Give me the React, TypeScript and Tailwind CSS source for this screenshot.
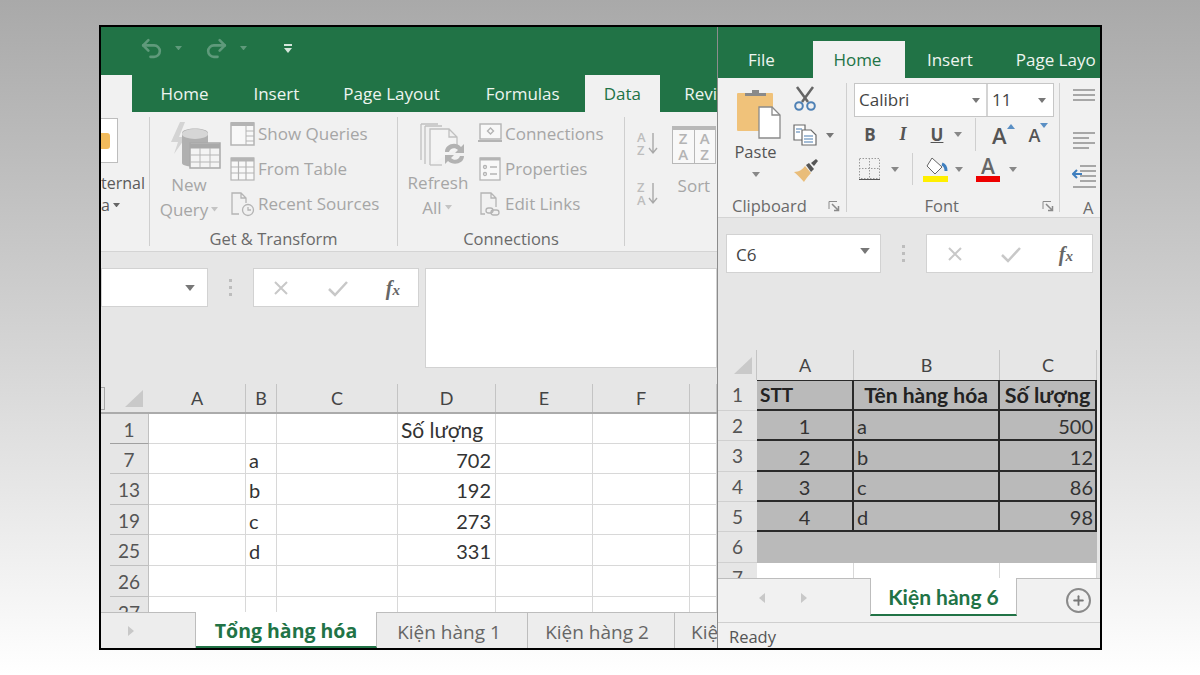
import { Undo2, Redo2, Plus } from "lucide-react"

// small dropdown triangle used all over the ribbon
function Caret({ className = "text-[#8a8a8a]", w = 8 }: { className?: string; w?: number }) {
  return (
    <svg width={w} height={w / 2 + 1} viewBox="0 0 8 5" className={`inline-block shrink-0 ${className}`}>
      <path d="M0 0h8L4 5z" fill="currentColor" />
    </svg>
  )
}

function ShowQueriesIcon() {
  return (
    <svg width="26" height="26" viewBox="0 0 26 26" fill="none" stroke="#b4b4b4" strokeWidth="1.5">
      <rect x="1" y="2" width="23" height="22" fill="#f8f8f8" />
      <path d="M1 3h23" strokeWidth="4" />
      <path d="M16 5v19M16 10h8M16 15h8M16 20h8" strokeWidth="1" />
    </svg>
  )
}

function FromTableIcon() {
  return (
    <svg width="26" height="26" viewBox="0 0 26 26" fill="none" stroke="#b4b4b4" strokeWidth="1.2">
      <rect x="1" y="2" width="23" height="22" fill="#f8f8f8" />
      <path d="M1 3.5h23" strokeWidth="4" />
      <path d="M1 11h23M1 17h23M8.5 5v19M16 5v19" />
    </svg>
  )
}

function RecentIcon() {
  return (
    <svg width="26" height="26" viewBox="0 0 26 26" fill="none" stroke="#b4b4b4" strokeWidth="1.3">
      <path d="M9 23H2V2h9l5 5v5M11 2v5h5" />
      <circle cx="18" cy="19" r="5.5" fill="#f1f1f1" />
      <path d="M18 16v3h3" />
    </svg>
  )
}

function NewQueryIcon() {
  return (
    <svg width="52" height="50" viewBox="0 0 52 50" fill="none">
      <path d="M10 1 1 21h7l-4 12 12-17h-7l6-15z" fill="#d4d4d4" />
      <path d="M12 12c0-6 26-6 26 0v30c0 5-26 5-26 0z" fill="#b0b0b0" />
      <ellipse cx="25" cy="13" rx="13" ry="5" fill="#d6d6d6" />
      <rect x="20" y="22" width="30" height="25" fill="#f4f4f4" stroke="#a9a9a9" strokeWidth="1.5" />
      <path d="M20 25h30" stroke="#a9a9a9" strokeWidth="5" />
      <path d="M20 34h30M20 41h30M30 27v20M40 27v20" stroke="#b6b6b6" />
    </svg>
  )
}

function ConnectionsIcon() {
  return (
    <svg width="24" height="22" viewBox="0 0 24 22" fill="none" stroke="#b4b4b4" strokeWidth="1.4">
      <rect x="2" y="1" width="21" height="15" fill="#f8f8f8" />
      <path d="M0 18h24" strokeWidth="2" />
      <path d="M12.5 5l3 3-3 3-3-3z" />
    </svg>
  )
}

function PropertiesIcon() {
  return (
    <svg width="22" height="25" viewBox="0 0 22 25" fill="none" stroke="#b4b4b4" strokeWidth="1.3">
      <rect x="1" y="2" width="20" height="22" fill="#f8f8f8" />
      <path d="M1 3h20" strokeWidth="3" />
      <circle cx="6" cy="11" r="1.5" />
      <circle cx="6" cy="18" r="1.5" />
      <path d="M11 11h7M11 18h7" />
    </svg>
  )
}

function EditLinksIcon() {
  return (
    <svg width="22" height="25" viewBox="0 0 22 25" fill="none" stroke="#b4b4b4" strokeWidth="1.3">
      <path d="M6 23H2V2h10l5 5v9M12 2v5h5" />
      <rect x="7" y="17" width="7" height="5" rx="2.5" />
      <rect x="12" y="19" width="8" height="5" rx="2.5" />
    </svg>
  )
}

function RefreshIcon() {
  return (
    <svg width="48" height="46" viewBox="0 0 48 46" fill="none" stroke="#c0c0c0" strokeWidth="1.3">
      <path d="M2 1h17M2 1v36M6 3h17M6 3v38" />
      <path d="M11 42V6h19l8 8v12M30 6v8h8" fill="#f4f4f4" />
      <path d="M11 42h12" />
      <path d="M27 33c0-8 11-11 16-5l3-3v9h-9l3-3c-3-3-8-2-9 2zM46 37c0 8-11 10-16 5l-3 3v-9h9l-3 3c3 3 8 2 9-2z" fill="#b2b2b2" stroke="none" transform="translate(-1 -4)" />
    </svg>
  )
}

function ScissorsIcon() {
  return (
    <svg width="24" height="25" viewBox="0 0 24 25" fill="none">
      <path d="M4 1l11 15M20 1 9 16" stroke="#666" strokeWidth="2.500" />
      <circle cx="6" cy="20" r="3.800" stroke="#4f81b5" strokeWidth="2" />
      <circle cx="18" cy="20" r="3.800" stroke="#4f81b5" strokeWidth="2" />
    </svg>
  )
}

function SortAZ({ top, bottom }: { top: string; bottom: string }) {
  return (
    <div className="flex items-center gap-[2px] text-[#bdbdbd]">
      <div className="flex flex-col text-[13px] leading-[13px] font-semibold">
        <span>{top}</span>
        <span>{bottom}</span>
      </div>
      <svg width="10" height="22" viewBox="0 0 10 22" fill="none" stroke="#a9a9a9" strokeWidth="1.4">
        <path d="M5 0v20M1 15l4 5 4-5" />
      </svg>
    </div>
  )
}

function ListRow({ icon, label }: { icon: React.ReactNode; label: string }) {
  return (
    <div className="flex h-[35px] items-center">
      <div className="flex w-[30px] shrink-0 justify-center">{icon}</div>
      <span className="text-[17px] whitespace-nowrap text-[#a6a6a6]">{label}</span>
    </div>
  )
}

function GroupLabel({ children }: { children: React.ReactNode }) {
  return <div className="text-center text-[16.500px] leading-[24px] text-[#6a6a6a]">{children}</div>
}

function Launcher() {
  return (
    <svg width="12" height="12" viewBox="0 0 12 12" fill="none" stroke="#8a8a8a">
      <path d="M1 9V1.500h8" />
      <path d="M4 4l6 6M6 10.500h4.500V6" strokeWidth="1.500" />
    </svg>
  )
}

function FormulaButtons() {
  return (
    <>
      <svg width="18" height="18" viewBox="0 0 18 18" fill="none" stroke="#c8c8c8" strokeWidth="2">
        <path d="M3 3l12 12M15 3 3 15" />
      </svg>
      <svg width="22" height="18" viewBox="0 0 22 18" fill="none" stroke="#c8c8c8" strokeWidth="2.500">
        <path d="M2 10l6 6L20 3" />
      </svg>
      <span className="font-['Liberation_Serif',serif] text-[20px] font-bold text-[#666] italic">
        f<span className="text-[15px]">x</span>
      </span>
    </>
  )
}

function SelectAll() {
  return (
    <svg width="18" height="17" viewBox="0 0 18 17">
      <path d="M18 0v17H0z" fill="#c9c9c9" />
    </svg>
  )
}

const Dots = () => (
  <div className="flex w-[3px] flex-col gap-[4px]">
    <div className="h-[3px] bg-[#bdbdbd]" />
    <div className="h-[3px] bg-[#bdbdbd]" />
    <div className="h-[3px] bg-[#bdbdbd]" />
  </div>
)

const leftRows = [
  { n: "1", h: "h-[30px]", b: "", d: "Số lượng", right: false },
  { n: "7", h: "h-[30px]", b: "a", d: "702", right: true },
  { n: "13", h: "h-[31px]", b: "b", d: "192", right: true },
  { n: "19", h: "h-[30px]", b: "c", d: "273", right: true },
  { n: "25", h: "h-[31px]", b: "d", d: "331", right: true },
  { n: "26", h: "h-[31px]", b: "", d: "", right: true },
  { n: "27", h: "h-[31px]", b: "", d: "", right: true },
]

const leftCols = "grid grid-cols-[97px_31px_121px_98px_97px_97px_27px]"

const rightRows = [
  { n: "2", h: "h-[30px]", a: "1", b: "a", c: "500" },
  { n: "3", h: "h-[31px]", a: "2", b: "b", c: "12" },
  { n: "4", h: "h-[30px]", a: "3", b: "c", c: "86" },
  { n: "5", h: "h-[30px]", a: "4", b: "d", c: "98" },
]

function LeftPane() {
  const cell = "border-r border-b border-[#d8d8d8] overflow-hidden"
  return (
    <div className="flex w-[616px] shrink-0 flex-col overflow-hidden font-['Open_Sans',sans-serif]">
      {/* title bar with quick access icons */}
      <div className="flex h-[48px] shrink-0 items-center bg-[#217346] pb-[6px] pl-[38px]">
        <Undo2 size={25} strokeWidth={2.500} className="text-[#5f9a7b]" />
        <Caret className="ml-[11px] text-[#5f9a7b]" w={7} />
        <Redo2 size={25} strokeWidth={2.500} className="ml-[22px] text-[#5f9a7b]" />
        <Caret className="ml-[11px] text-[#5f9a7b]" w={7} />
        <div className="ml-[37px] flex flex-col items-center gap-[2px]">
          <div className="h-[2px] w-[8px] bg-[#d5e5db]" />
          <Caret className="text-[#d5e5db]" w={8} />
        </div>
      </div>
      {/* tabs */}
      <div className="flex h-[37px] shrink-0 items-center bg-[#217346] text-[17px] whitespace-nowrap text-[#eef5f0]">
        <div className="h-full w-[32px] bg-[#f1f1f1]" />
        <span className="ml-[28px]">Home</span>
        <span className="ml-[45px]">Insert</span>
        <span className="ml-[44px]">Page Layout</span>
        <span className="ml-[46px]">Formulas</span>
        <div className="ml-[25px] flex h-full w-[77px] items-center justify-center bg-[#f1f1f1] text-[#217346]">Data</div>
        <span className="ml-[24px]">Revi</span>
      </div>
      {/* ribbon */}
      <div className="flex h-[140px] shrink-0 overflow-hidden border-b border-[#d4d4d4] bg-[#f1f1f1]">
        <div className="my-[5px] flex w-[49px] shrink-0 flex-col border-r border-[#cfcfcf]">
          <div className="mt-[1px] flex h-[45px] w-[17px] shrink-0 items-center overflow-hidden border-y border-r border-[#bdbdbd] bg-white">
            <div className="h-[16px] w-[9px] rounded-r-[3px] bg-[#f2bb5c]" />
          </div>
          <div className="mt-[9px] pr-[4px] text-right text-[16px] leading-[22px] text-[#5a5a5a]">ternal</div>
          <div className="flex items-center text-[16px] leading-[22px] text-[#5a5a5a]">
            a<Caret className="ml-[3px] text-[#666]" w={7} />
          </div>
        </div>
        <div className="my-[5px] flex w-[248px] shrink-0 flex-col border-r border-[#cfcfcf]">
          <div className="flex h-[110px] shrink-0">
            <div className="flex w-[78px] flex-col items-center pt-[4px] text-[17px] leading-[25px] text-[#a6a6a6]">
              <div className="ml-[14px]">
                <NewQueryIcon />
              </div>
              <span className="mt-[1px]">New</span>
              <span className="flex items-center gap-[3px]">
                Query
                <Caret className="text-[#c4c4c4]" w={7} />
              </span>
            </div>
            <div className="-mt-px flex flex-col">
              <ListRow icon={<ShowQueriesIcon />} label="Show Queries" />
              <ListRow icon={<FromTableIcon />} label="From Table" />
              <ListRow icon={<RecentIcon />} label="Recent Sources" />
            </div>
          </div>
          <GroupLabel>Get &amp; Transform</GroupLabel>
        </div>
        <div className="my-[5px] flex w-[227px] shrink-0 flex-col border-r border-[#cfcfcf]">
          <div className="flex h-[110px] shrink-0">
            <div className="flex w-[78px] flex-col items-center pt-[6px] text-[17px] leading-[25px] text-[#a6a6a6]">
              <div className="ml-[12px]">
                <RefreshIcon />
              </div>
              <span className="mt-[1px] pl-[2px]">Refresh</span>
              <span className="flex items-center gap-[3px]">
                All
                <Caret className="text-[#c4c4c4]" w={7} />
              </span>
            </div>
            <div className="-mt-px -ml-px flex flex-col">
              <ListRow icon={<ConnectionsIcon />} label="Connections" />
              <ListRow icon={<PropertiesIcon />} label="Properties" />
              <ListRow icon={<EditLinksIcon />} label="Edit Links" />
            </div>
          </div>
          <GroupLabel>Connections</GroupLabel>
        </div>
        <div className="flex">
          <div className="ml-[12px] flex flex-col gap-[24px] pt-[19px]">
            <SortAZ top="A" bottom="Z" />
            <SortAZ top="Z" bottom="A" />
          </div>
          <div className="ml-[14px] flex flex-col pt-[14px]">
            <div className="grid h-[38px] w-[44px] shrink-0 grid-cols-2 overflow-hidden border-x border-b border-t-[4px] border-[#b8b8b8] bg-[#f8f8f8] text-center text-[15px] leading-[16px] font-semibold text-[#b4b4b4]">
              <div className="flex flex-col">
                <span>Z</span>
                <span>A</span>
              </div>
              <div className="flex flex-col border-l border-[#b8b8b8]">
                <span>A</span>
                <span>Z</span>
              </div>
            </div>
            <span className="mt-[9px] ml-[6px] text-[17px] leading-[25px] text-[#a6a6a6]">Sort</span>
          </div>
        </div>
      </div>
      {/* formula bar */}
      <div className="flex h-[132px] shrink-0 items-start bg-[#e6e6e6] pt-[16px]">
        <div className="flex h-[39px] w-[107px] items-center justify-end border border-[#d2d2d2] bg-white pr-[12px]">
          <Caret className="text-[#777]" w={10} />
        </div>
        <div className="flex h-[39px] w-[45px] items-center justify-center">
          <Dots />
        </div>
        <div className="flex h-[39px] w-[166px] items-center justify-between border border-[#d2d2d2] bg-white px-[18px]">
          <FormulaButtons />
        </div>
        <div className="ml-[6px] h-[100px] flex-1 border border-[#d2d2d2] bg-white" />
      </div>
      {/* column headers */}
      <div className="flex h-[30px] shrink-0 border-b-2 border-[#ababab] bg-[#e6e6e6] text-[18px] text-[#444]">
        <div className="flex w-[48px] shrink-0 items-center">
          <div className="h-[23px] w-[4px] border-y border-r border-[#a8a8a8]" />
          <div className="ml-[20px]">
            <SelectAll />
          </div>
        </div>
        <div className={`${leftCols} flex-1`}>
          {["A", "B", "C", "D", "E", "F", ""].map((c, i) => (
            <div key={i} className="flex items-center justify-center border-r border-[#c4c4c4] font-['Lato',sans-serif]">
              {c}
            </div>
          ))}
        </div>
      </div>
      {/* sheet rows */}
      <div className="min-h-0 flex-1 overflow-hidden bg-white font-['Lato',sans-serif] text-[20px] leading-[24px] text-[#333]">
        {leftRows.map((r) => (
          <div key={r.n} className={`flex ${r.h}`}>
            <div className="w-[48px] shrink-0 bg-[#e6e6e6] pl-[9px]">
              <div className={`flex h-full items-center justify-center border-r border-b border-[#c0c0c0] pt-[2px] text-[19px] text-[#555] ${r.n === "1" ? "border-b-[#a0a0a0]" : ""}`}>
                {r.n}
              </div>
            </div>
            <div className={`${leftCols} flex-1`}>
              <div className={cell} />
              <div className={`${cell} flex items-center pt-[2px] pl-[3px]`}>{r.b}</div>
              <div className={cell} />
              <div className={`${cell} flex items-center pt-[2px] pr-[4px] pl-[3px] ${r.right ? "justify-end" : "text-[21px] whitespace-nowrap"}`}>{r.d}</div>
              <div className={cell} />
              <div className={cell} />
              <div className={cell} />
            </div>
          </div>
        ))}
      </div>
      {/* sheet tabs */}
      <div className="flex h-[36px] shrink-0 border-t border-[#bdbdbd] bg-[#ededed] text-[19px] text-[#666]">
        <div className="flex w-[95px] shrink-0 items-center border-r border-[#bdbdbd] pl-[27px]">
          <svg width="6" height="10" viewBox="0 0 6 10">
            <path d="M0 0l6 5-6 5z" fill="#c8c8c8" />
          </svg>
        </div>
        <div className="-mt-px flex w-[181px] shrink-0 items-center justify-center border-r border-b-2 border-r-[#bdbdbd] border-b-[#217346] bg-white pt-[3px] text-[19.500px] font-bold text-[#217346]">
          Tổng hàng hóa
        </div>
        <div className="flex w-[151px] shrink-0 items-center justify-center border-r border-[#bdbdbd] pt-[3px] pr-[6px]">Kiện hàng 1</div>
        <div className="flex w-[147px] shrink-0 items-center justify-center border-r border-[#bdbdbd] pt-[3px] pr-[8px]">Kiện hàng 2</div>
        <span className="ml-[16px] self-center pt-[3px]">Kiệ</span>
      </div>
    </div>
  )
}

function RightPane() {
  const dark = "border-r-2 border-b-2 border-[#2a2a2a]"
  const num = "flex w-[39px] shrink-0 items-center justify-center border-b border-[#d0d0d0] text-[19px] text-[#555]"
  return (
    <div className="flex min-w-0 flex-1 flex-col overflow-hidden border-l border-[#8c8c8c] font-['Open_Sans',sans-serif]">
      {/* tabs on top of the green bar */}
      <div className="flex h-[51px] shrink-0 items-end bg-[#217346] text-[17px] whitespace-nowrap text-[#eef5f0]">
        <span className="ml-[30px] h-[37px] leading-[37px]">File</span>
        <div className="ml-[38px] flex h-[37px] w-[92px] items-center justify-center bg-[#f1f1f1] pr-[3px] text-[#217346]">Home</div>
        <span className="ml-[22px] h-[37px] leading-[37px]">Insert</span>
        <span className="ml-[43px] h-[37px] leading-[37px]">Page Layo</span>
      </div>
      {/* ribbon */}
      <div className="flex h-[140px] shrink-0 overflow-hidden border-b border-[#d4d4d4] bg-[#f1f1f1]">
        <div className="my-[5px] flex w-[129px] shrink-0 flex-col border-r border-[#cfcfcf]">
          <div className="flex h-[110px] shrink-0">
            <div className="flex w-[75px] flex-col items-center pt-[6px]">
              <svg width="44" height="50" viewBox="0 0 44 50" className="ml-[6px]">
                <rect x="0" y="4" width="36" height="38" rx="1" fill="#f0c27a" />
                <path d="M8 7V4h7V1h7v3h7v3z" fill="#8a8a8a" />
                <path d="M22 18h13l8 8v23H22z" fill="#fff" stroke="#8a8a8a" strokeWidth="1.300" />
                <path d="M35 18v8h8" fill="none" stroke="#8a8a8a" strokeWidth="1.300" />
              </svg>
              <span className="mt-[1px] text-[16.500px] leading-[24px] text-[#555]">Paste</span>
              <Caret className="mt-[8px] text-[#888]" w={8} />
            </div>
            <div className="flex flex-col pt-[3px]">
              <ScissorsIcon />
              <div className="mt-[13px] flex items-center">
                <svg width="24" height="22" viewBox="0 0 24 22" fill="#fff" stroke="#6a6a6a" strokeWidth="1.200">
                  <path d="M1 1h11v15H1z" />
                  <path d="M9 6h9l5 5v10H9z" />
                  <path d="M11 12h9M11 15h9M11 18h9M3 5h6M3 8h4" stroke="#4a7cb0" />
                </svg>
                <Caret className="ml-[9px] text-[#777]" w={8} />
              </div>
              <svg width="26" height="24" viewBox="0 0 26 24" className="mt-[13px]">
                <path d="M1 13c5 0 9-3 11-6l6 7c-3 3-6 7-7 9-3-3-6-7-10-10z" fill="#e9bd7a" />
                <path d="M13 6l3-2 5 6-3 3z" fill="#555" />
                <path d="M18 4l5-4 2 2-4 5z" fill="#555" />
              </svg>
            </div>
          </div>
          <div className="flex items-center justify-between pt-[1px] pr-[6px] pl-[14px]">
            <span className="text-[16.500px] leading-[24px] text-[#6a6a6a]">Clipboard</span>
            <Launcher />
          </div>
        </div>
        <div className="my-[5px] flex w-[213px] shrink-0 flex-col border-r border-[#cfcfcf]">
          <div className="flex h-[110px] shrink-0 flex-col pl-[7px]">
            <div className="flex h-[34px] w-[200px] shrink-0 border border-[#c6c6c6] bg-white text-[17px] leading-[24px] text-[#444]">
              <div className="flex w-[133px] items-center justify-between border-r-2 border-[#d4d4d4] pr-[6px] pl-[4px]">
                Calibri
                <Caret className="text-[#777]" w={8} />
              </div>
              <div className="flex flex-1 items-center justify-between pr-[7px] pl-[4px]">
                11
                <Caret className="text-[#777]" w={8} />
              </div>
            </div>
            <div className="flex h-[35px] shrink-0 items-center text-[#555]">
              <span className="ml-[8px] w-[16px] text-center text-[17px] font-bold">B</span>
              <span className="ml-[17px] w-[16px] text-center font-['Liberation_Serif',serif] text-[18px] font-bold italic">I</span>
              <span className="ml-[18px] w-[16px] text-center text-[17px] font-bold underline">U</span>
              <Caret className="ml-[9px] text-[#888]" w={8} />
              <div className="ml-[13px] h-[33px] w-px bg-[#cfcfcf]" />
              <div className="ml-[16px] flex items-start text-[22px] leading-[26px] font-semibold">
                A
                <svg width="8" height="5" viewBox="0 0 8 5" className="mt-[2px]">
                  <path d="M0 5 4 0l4 5z" fill="#5a8fc4" />
                </svg>
              </div>
              <div className="ml-[14px] flex items-start text-[18px] leading-[26px] font-semibold">
                A
                <svg width="8" height="5" viewBox="0 0 8 5" className="mt-[1px]">
                  <path d="M0 0h8L4 5z" fill="#5a8fc4" />
                </svg>
              </div>
            </div>
            <div className="flex h-[34px] shrink-0 items-center">
              <svg width="22" height="22" viewBox="0 0 22 22" fill="none" stroke="#9a9a9a" strokeDasharray="1.500 1.500" className="ml-[5px]">
                <rect x="0.500" y="0.500" width="20" height="20" />
                <path d="M0 10.500h21M10.500 0v21" />
                <path d="M0 21.500h21" stroke="#555" strokeDasharray="none" />
              </svg>
              <Caret className="ml-[10px] text-[#888]" w={8} />
              <div className="ml-[13px] h-[32px] w-px bg-[#cfcfcf]" />
              <svg width="26" height="26" viewBox="0 0 26 26" className="ml-[10px]">
                <path d="M9 2l10 9-7 7-8-8z" fill="#fff" stroke="#666" />
                <path d="M19 8c3 1 4 4 4 7" stroke="#3f7fbf" strokeWidth="3" fill="none" />
                <rect x="0" y="20" width="25" height="6" fill="#ffef00" />
              </svg>
              <Caret className="ml-[6px] text-[#888]" w={8} />
              <div className="ml-[13px] flex w-[24px] flex-col items-center">
                <span className="text-[21px] leading-[19px] font-semibold text-[#666]">A</span>
                <div className="h-[6px] w-[24px] bg-[#ee0000]" />
              </div>
              <Caret className="ml-[9px] text-[#888]" w={8} />
            </div>
          </div>
          <div className="flex items-center justify-end pt-[1px] pr-[5px]">
            <span className="mr-[83px] text-[16.500px] leading-[24px] text-[#6a6a6a]">Font</span>
            <Launcher />
          </div>
        </div>
        <div className="flex flex-col pl-[12px]">
          <svg width="24" height="112" viewBox="0 0 24 112" fill="none" stroke="#8f8f8f" strokeWidth="1.500" className="mt-[6px] shrink-0">
            <path d="M1 6h22M1 11h22M1 16h22" />
            <path d="M1 49h22M1 54h16M1 59h22M1 64h16" />
            <path d="M8 82h16M8 87h16M8 92h16M8 97h16M1 103h23" />
            <path d="M10 90H2m3-4-4 4 4 4" stroke="#3f7fbf" strokeWidth="2" />
          </svg>
          <span className="ml-[11px] text-[16.500px] leading-[24px] text-[#6a6a6a]">A</span>
        </div>
      </div>
      {/* formula bar */}
      <div className="flex h-[132px] shrink-0 items-start bg-[#e6e6e6] pt-[16px]">
        <div className="ml-[8px] flex h-[39px] w-[155px] items-center justify-between border border-[#d2d2d2] bg-white pt-[2px] pr-[10px] pl-[9px] text-[17px] text-[#444]">
          C6
          <Caret className="-mt-[8px] text-[#777]" w={10} />
        </div>
        <div className="flex h-[39px] w-[45px] items-center justify-center">
          <Dots />
        </div>
        <div className="flex h-[39px] w-[167px] items-center justify-between border border-[#d2d2d2] bg-white px-[19px]">
          <FormulaButtons />
        </div>
      </div>
      {/* column headers */}
      <div className="flex h-[30px] shrink-0 bg-[#e6e6e6] text-[18px] text-[#444]">
        <div className="flex w-[39px] shrink-0 items-center justify-end border-r border-[#c4c4c4] pr-[4px]">
          <SelectAll />
        </div>
        <div className="grid flex-1 grid-cols-[97px_146px_97px_4px] font-['Lato',sans-serif]">
          <div className="flex items-center justify-center border-r border-[#c4c4c4]">A</div>
          <div className="flex items-center justify-center border-r border-[#c4c4c4]">B</div>
          <div className="flex items-center justify-center border-r border-[#c4c4c4]">C</div>
          <div />
        </div>
      </div>
      {/* sheet rows */}
      <div className="min-h-0 flex-1 overflow-hidden bg-[#e6e6e6] font-['Lato',sans-serif] text-[20px] leading-[24px] text-[#333]">
        <div className="flex h-[31px]">
          <div className={num}>1</div>
          <div className="grid w-[340px] grid-cols-[97px_146px_97px] border-t border-[#2a2a2a] bg-[#bababa] font-bold text-[#222]">
            <div className={`${dark} flex items-center pl-[3px] text-[19px]`}>STT</div>
            <div className={`${dark} flex items-center justify-center text-[21px] whitespace-nowrap`}>Tên hàng hóa</div>
            <div className={`${dark} flex items-center justify-center text-[21.500px] whitespace-nowrap`}>Số lượng</div>
          </div>
        </div>
        {rightRows.map((r) => (
          <div key={r.n} className={`flex ${r.h}`}>
            <div className={num}>{r.n}</div>
            <div className="grid w-[340px] grid-cols-[97px_146px_97px] bg-[#bababa]">
              <div className={`${dark} flex items-center justify-center pt-[2px]`}>{r.a}</div>
              <div className={`${dark} flex items-center pt-[2px] pl-[3px]`}>{r.b}</div>
              <div className={`${dark} flex items-center justify-end pt-[2px] pr-[2px]`}>{r.c}</div>
            </div>
          </div>
        ))}
        <div className="flex h-[31px]">
          <div className={num}>6</div>
          <div className="w-[340px] bg-[#bababa]" />
        </div>
        <div className="flex h-[31px]">
          <div className={num}>7</div>
          <div className="grid w-[340px] grid-cols-[97px_146px_97px] bg-white">
            <div className="border-r border-[#d8d8d8]" />
            <div className="border-r border-[#d8d8d8]" />
            <div className="border-r border-[#d8d8d8]" />
          </div>
        </div>
      </div>
      {/* sheet tabs */}
      <div className="flex h-[44px] shrink-0 items-start border-t border-[#bdbdbd] bg-[#f1f1f1]">
        <div className="flex h-[37px] w-[152px] shrink-0 items-center gap-[36px] pl-[41px]">
          <svg width="6" height="10" viewBox="0 0 6 10">
            <path d="M6 0 0 5l6 5z" fill="#c8c8c8" />
          </svg>
          <svg width="6" height="10" viewBox="0 0 6 10">
            <path d="M0 0l6 5-6 5z" fill="#c8c8c8" />
          </svg>
        </div>
        <div className="-mt-px flex h-[38px] w-[147px] shrink-0 items-center justify-center border-x border-b-2 border-x-[#bdbdbd] border-b-[#217346] bg-white pt-[2px] font-['Lato',sans-serif] text-[21px] font-bold text-[#217346]">
          Kiện hàng 6
        </div>
        <div className="ml-[49px] flex h-[25px] w-[25px] items-center justify-center self-center rounded-full border-2 border-[#8a8a8a]">
          <Plus size={15} strokeWidth={3} className="text-[#777]" />
        </div>
      </div>
      {/* status bar */}
      <div className="flex h-[26px] shrink-0 items-center border-t border-[#cfcfcf] bg-[#f1f1f1] pt-[3px] pl-[11px] text-[16.500px] leading-[22px] text-[#555]">Ready</div>
    </div>
  )
}

export default function App() {
  return (
    <div className="h-[675px] w-[1200px] overflow-hidden bg-linear-to-b from-[#a9a9a9] to-white pt-[25px] pl-[99px]">
      <div className="flex h-[625px] w-[1003px] overflow-hidden border-2 border-black bg-[#217346]">
        <LeftPane />
        <RightPane />
      </div>
    </div>
  )
}
